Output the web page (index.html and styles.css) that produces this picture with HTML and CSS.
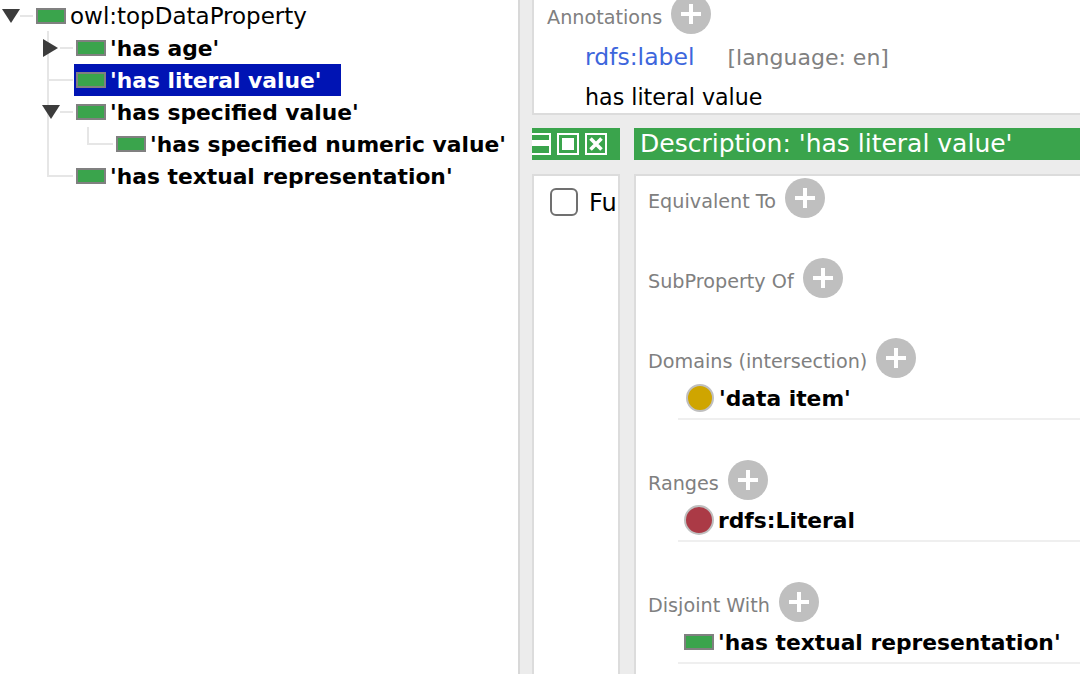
FILE: index.html
```html
<!DOCTYPE html>
<html lang="en">
<head>
    <meta charset="UTF-8">
    <meta name="viewport" content="width=device-width, initial-scale=1.0">
    <title>Data property hierarchy</title>
    <link rel="stylesheet" href="styles.css">
</head>
<body>
    <div class="app">
        <!-- Hierarchy tree -->
        <div class="tree-pane">
            <span class="tree-line line-main"></span>
            <span class="tree-line line-child"></span>
            <div class="tree-row root">
                <span class="twist down"></span><span class="link"></span>
                <span class="prop"></span><span class="name regular">owl:topDataProperty</span>
            </div>
            <div class="tree-row level-1">
                <span class="twist right"></span><span class="link"></span>
                <span class="prop"></span><span class="name">'has age'</span>
            </div>
            <div class="tree-row level-1">
                <span class="twist leaf"></span><span class="link long"></span>
                <span class="selected"><span class="prop"></span><span class="name">'has literal value'</span></span>
            </div>
            <div class="tree-row level-1">
                <span class="twist down"></span><span class="link"></span>
                <span class="prop"></span><span class="name">'has specified value'</span>
            </div>
            <div class="tree-row level-2">
                <span class="twist leaf"></span><span class="link long"></span>
                <span class="prop"></span><span class="name">'has specified numeric value'</span>
            </div>
            <div class="tree-row level-1">
                <span class="twist leaf"></span><span class="link long"></span>
                <span class="prop"></span><span class="name">'has textual representation'</span>
            </div>
        </div>

        <div class="main-pane">
            <!-- Annotations -->
            <div class="annotations">
                <div class="section-head">
                    <span class="label">Annotations</span>
                    <span class="add"></span>
                </div>
                <div class="annot-row">
                    <span class="annot-prop">rdfs:label</span>
                    <span class="annot-lang">[language: en]</span>
                </div>
                <div class="annot-value">has literal value</div>
            </div>

            <!-- Title bars -->
            <div class="bars">
                <div class="bar-buttons">
                    <span class="bar-btn split"></span>
                    <span class="bar-btn"><span class="square"></span></span>
                    <span class="bar-btn">
                        <svg width="18" height="18" viewBox="0 0 18 18"><path d="M3.5 3.5l11 11M14.5 3.5l-11 11" stroke="#fff" stroke-width="3.6" fill="none"/></svg>
                    </span>
                </div>
                <div class="bar-title">Description: 'has literal value'</div>
            </div>

            <div class="panels">
                <!-- Characteristics -->
                <div class="chars">
                    <span class="checkbox"></span><span class="chars-text">Fu</span>
                </div>

                <!-- Description -->
                <div class="desc">
                    <div class="section">
                        <div class="section-head"><span class="label">Equivalent To</span><span class="add"></span></div>
                    </div>
                    <div class="section">
                        <div class="section-head"><span class="label">SubProperty Of</span><span class="add"></span></div>
                    </div>
                    <div class="section">
                        <div class="section-head"><span class="label">Domains (intersection)</span><span class="add"></span></div>
                        <div class="item">
                            <span class="dot gold"></span><span class="name">'data item'</span>
                        </div>
                    </div>
                    <div class="section">
                        <div class="section-head"><span class="label">Ranges</span><span class="add"></span></div>
                        <div class="item">
                            <span class="dot red"></span><span class="name">rdfs:Literal</span>
                        </div>
                    </div>
                    <div class="section">
                        <div class="section-head"><span class="label">Disjoint With</span><span class="add"></span></div>
                        <div class="item">
                            <span class="prop"></span><span class="name">'has textual representation'</span>
                        </div>
                    </div>
                </div>
            </div>
        </div>
    </div>
</body>
</html>
```

FILE: styles.css
```css
html, body {
    margin: 0;
    padding: 0;
    height: 100%;
    overflow: hidden;
}
body {
    font-family: "DejaVu Sans", Verdana, sans-serif;
    background-color: #ececec;
    color: #000000;
}
.app {
    display: flex;
    width: 1080px;
    height: 674px;
    overflow: hidden;
}

/* tree */
.tree-pane {
    position: relative;
    width: 518px;
    flex-shrink: 0;
    background-color: #ffffff;
    border-right: 2px solid #d8d8d8;
    overflow: hidden;
}
.tree-row {
    display: flex;
    align-items: center;
    height: 32px;
}
.root {
    padding-left: 2px;
}
.level-1 {
    padding-left: 42px;
}
.level-2 {
    padding-left: 82px;
}
.twist {
    position: relative;
    width: 18px;
    height: 16px;
    flex-shrink: 0;
}
.twist.leaf {
    width: 7px;
}
.twist.down::before {
    content: "";
    position: absolute;
    left: 0;
    top: 1px;
    border-left: 9px solid transparent;
    border-right: 9px solid transparent;
    border-top: 14px solid #3c3c3c;
}
.twist.right::before {
    content: "";
    position: absolute;
    left: 1px;
    top: -1px;
    border-top: 9px solid transparent;
    border-bottom: 9px solid transparent;
    border-left: 15px solid #3c3c3c;
}
.link {
    width: 13px;
    height: 2px;
    margin-right: 3px;
    background-color: #e6e6e6;
    flex-shrink: 0;
}
.link.long {
    width: 24px;
}
.tree-line {
    position: absolute;
    background-color: #e6e6e6;
}
.line-main {
    left: 47px;
    top: 31px;
    width: 2px;
    height: 146px;
}
.line-child {
    left: 87px;
    top: 127px;
    width: 2px;
    height: 18px;
}
.prop {
    display: inline-block;
    box-sizing: border-box;
    width: 30px;
    height: 16px;
    background-color: #3aa44c;
    border: 2px solid #808080;
    flex-shrink: 0;
}
.name {
    font-size: 21.8px;
    font-weight: bold;
    margin-left: 4px;
    white-space: nowrap;
}
.name.regular {
    font-size: 23px;
    font-weight: normal;
}
.selected {
    display: flex;
    align-items: center;
    height: 32px;
    padding: 0 19px 0 2px;
    margin-left: -2px;
    background-color: #0014b4;
    color: #ffffff;
}

/* right side */
.main-pane {
    flex: 1;
    min-width: 0;
    padding-left: 12px;
}
.annotations {
    display: flow-root;
    height: 115px;
    box-sizing: border-box;
    background-color: #ffffff;
    border: solid #dcdcdc;
    border-width: 0 0 2px 2px;
    padding-left: 13px;
}
.section-head {
    display: flex;
    align-items: center;
    height: 40px;
}
.label {
    font-size: 19.2px;
    color: #808080;
    white-space: nowrap;
    margin-top: 6px;
}
.add {
    position: relative;
    width: 40px;
    height: 40px;
    margin-left: 9px;
    border-radius: 50%;
    background-color: #bfbfbf;
    flex-shrink: 0;
}
.add::before, .add::after {
    content: "";
    position: absolute;
    background-color: #ffffff;
}
.add::before {
    left: 10px;
    top: 18px;
    width: 20px;
    height: 4px;
}
.add::after {
    left: 18px;
    top: 10px;
    width: 4px;
    height: 20px;
}
.annotations .section-head {
    margin-top: -6px;
}
.annot-row {
    display: flex;
    align-items: baseline;
    height: 36px;
    margin-top: 5px;
    padding-left: 38px;
    font-size: 22px;
    line-height: 36px;
}
.annot-prop {
    font-size: 23.5px;
    color: #3d66dc;
}
.annot-lang {
    color: #808080;
    margin-left: 33px;
}
.annot-value {
    margin-top: 4px;
    padding-left: 38px;
    font-size: 22.2px;
    line-height: 36px;
}
.bars {
    display: flex;
    gap: 14px;
    margin-top: 13px;
    height: 32px;
}
.bar-buttons {
    display: flex;
    gap: 6px;
    width: 88px;
    align-items: center;
    background-color: #3aa44c;
    overflow: hidden;
    flex-shrink: 0;
}
.bar-btn {
    box-sizing: border-box;
    display: flex;
    align-items: center;
    justify-content: center;
    width: 22px;
    height: 22px;
    border: 2px solid #ffffff;
    flex-shrink: 0;
}
.bar-btn.split {
    width: 19px;
    border-left: none;
    background: linear-gradient(#3aa44c 5px, #ffffff 5px, #ffffff 11px, #3aa44c 11px);
    background-origin: padding-box;
    background-clip: padding-box;
}
.square {
    width: 12px;
    height: 12px;
    background-color: #ffffff;
}
.bar-title {
    flex: 1;
    background-color: #3aa44c;
    color: #ffffff;
    font-size: 25px;
    line-height: 32px;
    padding-left: 6px;
    white-space: nowrap;
}
.panels {
    display: flex;
    gap: 14px;
    margin-top: 14px;
    height: 500px;
}
.chars {
    display: flex;
    align-items: flex-start;
    box-sizing: border-box;
    width: 88px;
    background-color: #ffffff;
    border: solid #dcdcdc;
    border-width: 2px 2px 0 2px;
    padding: 12px 0 0 16px;
    flex-shrink: 0;
}
.checkbox {
    box-sizing: border-box;
    width: 28px;
    height: 28px;
    border: 2px solid #707070;
    border-radius: 6px;
    background-color: #ffffff;
    flex-shrink: 0;
}
.chars-text {
    font-size: 24px;
    margin-left: 11px;
    line-height: 30px;
}
.desc {
    flex: 1;
    min-width: 0;
    box-sizing: border-box;
    background-color: #ffffff;
    border: solid #dcdcdc;
    border-width: 2px 0 0 2px;
    padding: 2px 0 0 12px;
}
.section {
    margin-bottom: 40px;
}
.item {
    display: flex;
    align-items: center;
    box-sizing: border-box;
    height: 42px;
    margin-left: 30px;
    padding-left: 6px;
    border-bottom: 2px solid #efefef;
}
.dot {
    box-sizing: border-box;
    width: 28px;
    height: 28px;
    margin: 0 1px 0 2px;
    border-radius: 50%;
    border: 2px solid #bfbfbf;
    flex-shrink: 0;
}
.gold {
    background-color: #cfa500;
}
.red {
    width: 30px;
    height: 30px;
    margin: 0;
    background-color: #ab3a46;
}
```
